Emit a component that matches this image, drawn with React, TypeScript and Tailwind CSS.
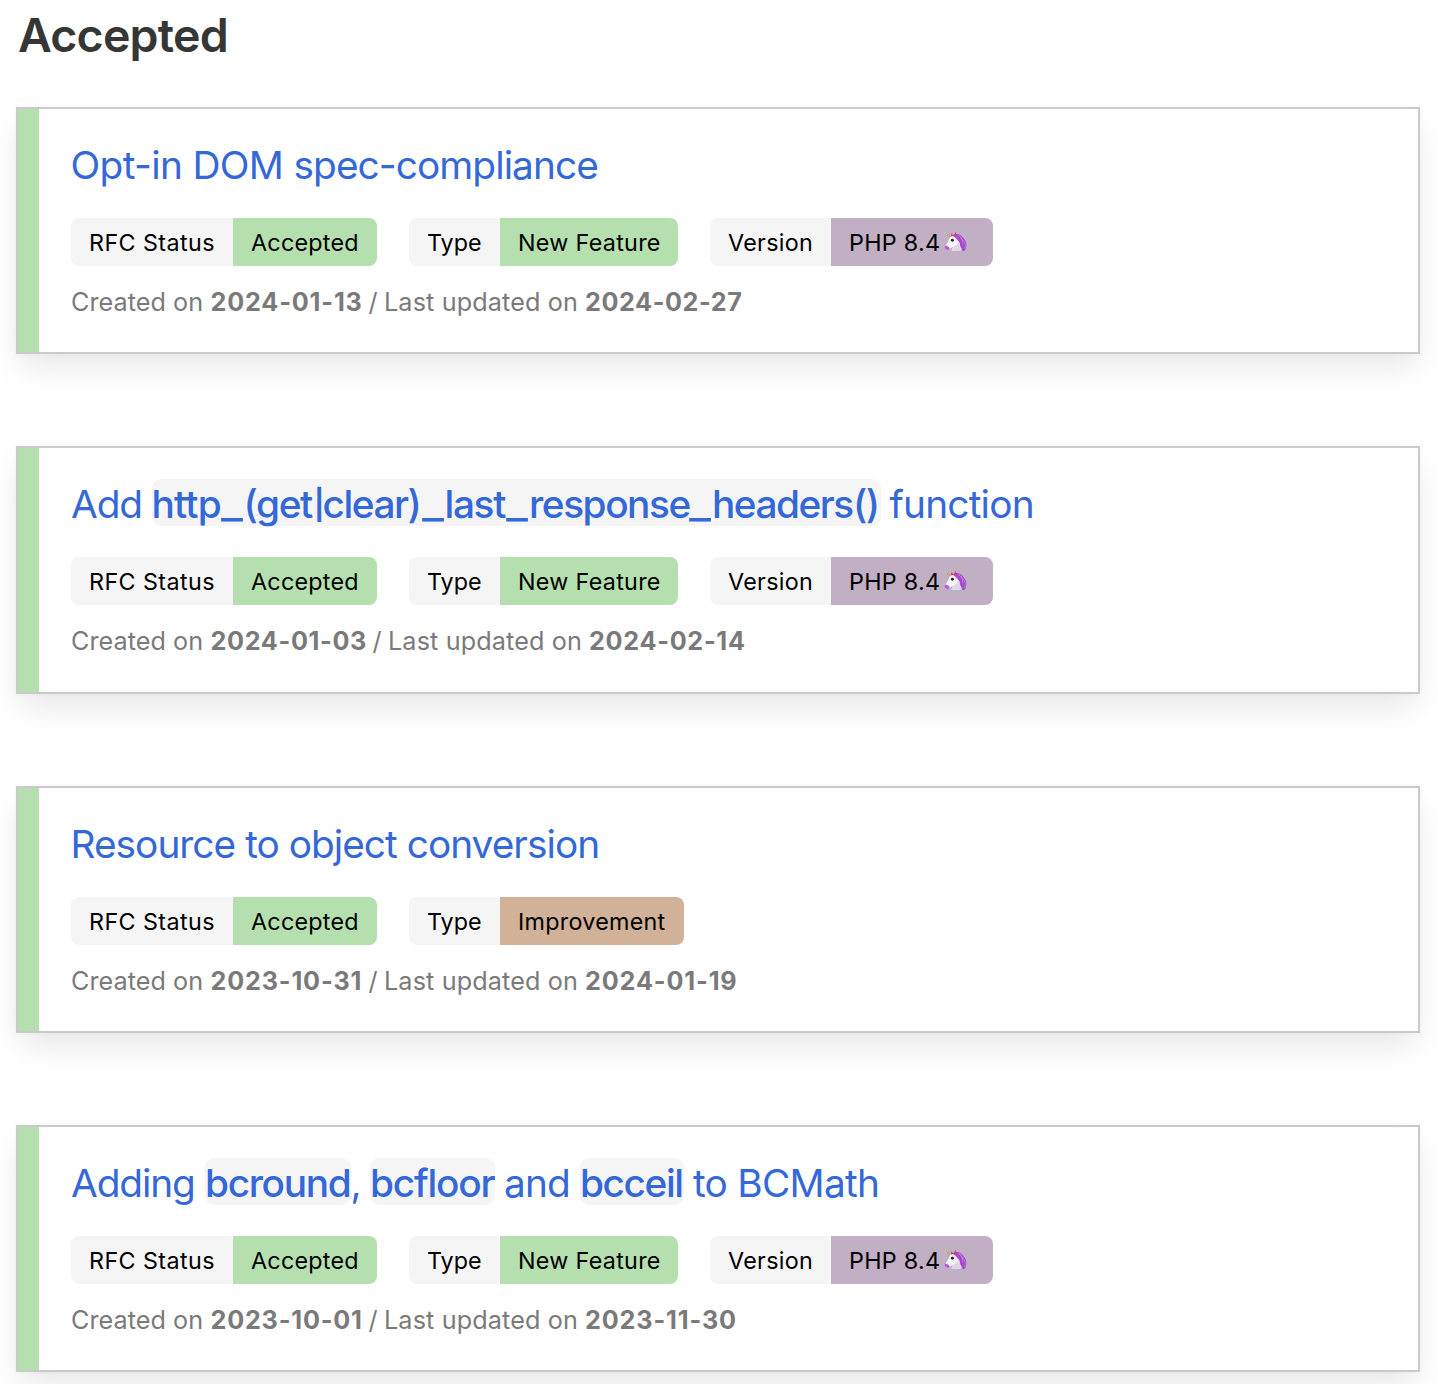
import type { ReactNode } from "react";

function Unicorn() {
  return (
    <svg viewBox="0 0 69 62" className="ml-[4px] h-[20.5px] w-[23px] shrink-0 -translate-y-[0.7px]">
      <path d="M26 12C34 5 51 7 57 19C66 27 70 42 66 48C66 56 61 61 55 60C57 51 52 48 45 47C36 41 29 28 26 12Z" fill="#a347cf" />
      <path d="M38 12C50 16 57 28 56 43C60 36 58 21 47 13Z" fill="#d07be8" />
      <path d="M57 25C64 33 66 43 62 53" fill="none" stroke="#c873e2" strokeWidth="3" />
      <path d="M18 18C26 11 37 13 42 24C48 33 48 44 51 57C42 61 29 60 22 57C25 51 28 49 28 46C23 49 19 52 14 55C8 59 2 53 3 46C8 38 12 30 18 18Z" fill="#f6f4fa" />
      <path d="M31 44C38 44 43 38 44 29C49 39 49 49 51 57C43 61 30 60 22 57C27 52 30 50 31 44Z" fill="#dcd4e8" />
      <path d="M3 44C10 43 16 48 17 53C12 59 4 57 2 50Z" fill="#bd5ad6" />
      <path d="M26 12C34 9 44 15 49 34C42 31 40 24 35 20C31 17 28 16 26 12Z" fill="#b44fd6" />
      <path d="M30 14L34 1L39 15ZM20 15L23 5L28 14Z" fill="#cf3f6c" />
      <path d="M0 1L20 11L15 19Z" fill="#f8d95f" />
      <path d="M5 4L9 6L7 10Z" fill="#4fc995" />
      <path d="M11 7L15 9L11 15L8 11Z" fill="#55b4ee" />
      <path d="M16 9L20 12L15 19L12 16Z" fill="#f08a63" />
      <circle cx="25" cy="27" r="4.500" fill="#2b2030" />
    </svg>
  );
}

function Tag({ label, children, color }: { label: ReactNode; children: ReactNode; color: string }) {
  return (
    <div className="flex h-12 overflow-hidden rounded-lg text-[23.3px] leading-[49px] whitespace-nowrap text-black">
      <div className="bg-[#f5f5f5] pl-[18px]">{label}</div>
      <div className={`flex items-center pl-[18px] ${color}`}>{children}</div>
    </div>
  );
}

function Code({ children, className }: { children: ReactNode; className: string }) {
  return <code className={`block h-[47px] rounded-[9px] bg-[#f5f5f5] font-['Inter',sans-serif] leading-[50px] font-medium ${className}`}>{children}</code>;
}

function Underscore() {
  return <span className="inline-block w-[23px] origin-left scale-x-[1.22] tracking-normal">_</span>;
}

type CardProps = {
  title: ReactNode;
  type: "feature" | "improvement";
  created: string;
  createdClass: string;
  updated: string;
  updatedClass: string;
  className?: string;
};

function Card({ title, type, created, createdClass, updated, updatedClass, className = "h-[247px]" }: CardProps) {
  return (
    <article className={`flex border-2 border-[#cacaca] bg-white shadow-[0_16px_32px_-4px_rgba(10,10,10,0.1),0_0_0_2px_rgba(10,10,10,0.01)] ${className}`}>
      <div className="w-[21px] shrink-0 bg-[#b5dfae]" />
      <div className="pt-[31px] pl-8">
        <h2 className="flex h-[47px] text-[38.8px] leading-[49px] whitespace-pre text-[#3468d8]">{title}</h2>
        <div className="mt-[31px] flex gap-8">
          <Tag
            label={<span className="block w-36 tracking-[0.42px]">RFC Status</span>}
            color="bg-[#b5dfae]"
          >
            <span className="block w-[126px] tracking-[0.25px]">Accepted</span>
          </Tag>
          <Tag
            label={<span className="block w-[73px]">Type</span>}
            color={type === "feature" ? "bg-[#b5dfae]" : "bg-[#d1b197]"}
          >
            {type === "feature" ? (
              <span className="block w-40 tracking-[0.3px]">New Feature</span>
            ) : (
              <span className="block w-[166px] tracking-[0.28px]">Improvement</span>
            )}
          </Tag>
          {type === "feature" && (
            <Tag label={<span className="block w-[103px] tracking-[0.3px]">Version</span>} color="bg-[#c1afc3]">
              <span className="flex w-36 items-center">
                <span className="w-[91px] shrink-0 tracking-[0.3px]">PHP 8.4</span>
                <Unicorn />
              </span>
            </Tag>
          )}
        </div>
        <p className="mt-4 flex h-10 text-[25.2px] leading-10 whitespace-pre text-[#7a7a7a]">
          <span className="w-[139.500px] tracking-[0.05px]">Created on</span>
          <strong className={`font-bold ${createdClass}`}>{created}</strong>
          <span className="w-[15.500px]">/</span>
          <span className="w-[201px] tracking-[0.13px]">Last updated on</span>
          <strong className={`font-bold ${updatedClass}`}>{updated}</strong>
        </p>
      </div>
    </article>
  );
}

export default function App() {
  return (
    <main className="h-[1384px] w-[1438px] overflow-hidden bg-white pl-4 font-['Inter',sans-serif]">
      <h1 className="h-[107px] pl-[2px] text-[46.5px] leading-[71px] font-semibold tracking-[-0.8px] text-[#363636]">Accepted</h1>
      <section className="flex w-[1404px] flex-col gap-[92px]">
        <Card
          title={
            <span className="-ml-[0.5px] tracking-[-0.93px]">
              <span className="tracking-[-0.64px]">Opt-in DOM </span>spec-compliance
            </span>
          }
          type="feature"
          created="2024-01-13"
          createdClass="w-[158px] tracking-[0.83px]"
          updated="2024-02-27"
          updatedClass="tracking-[0.58px]"
        />
        <Card
          className="h-[248px]"
          title={
            <>
              <span className="w-[80.5px] tracking-[-1.1px]">Add</span>
              <Code className="w-[729px] tracking-[-1.35px]">
                <span className="inline-block w-[69px] tracking-[-0.82px]">http</span>
                <Underscore />
                <span className="inline-block w-[69.5px] tracking-[-1.4px]">(get</span>
                <span className="inline-block w-[9.5px] origin-center -translate-x-[0.5px] scale-y-[0.76]">|</span>
                <span className="inline-block w-[99px] tracking-[-1.45px]">clear)</span>
                <Underscore />
                <span className="inline-block w-[61.5px]">last</span>
                <Underscore />
                <span className="inline-block w-[160px] tracking-[-1.45px]">response</span>
                <Underscore />
                <span className="inline-block w-[141px] tracking-[-1.5px]">headers</span>
                <span className="tracking-[-1.6px]">()</span>
              </Code>
              <span className="ml-[9px] tracking-[-0.8px]">function</span>
            </>
          }
          type="feature"
          created="2024-01-03"
          createdClass="w-[162px] tracking-[0.65px]"
          updated="2024-02-14"
          updatedClass="tracking-[0.7px]"
        />
        <Card
          title={<span className="-ml-[0.5px] tracking-[-0.97px]">Resource to object conversion</span>}
          type="improvement"
          created="2023-10-31"
          createdClass="w-[158px] tracking-[0.83px]"
          updated="2024-01-19"
          updatedClass="tracking-[0.86px]"
        />
        <Card
          title={
            <>
              <span className="w-[134px] tracking-[-1.1px]">Adding</span>
              <Code className="w-[146px] tracking-[-1.35px]">bcround</Code>
              <span className="-ml-[0.5px] w-[19.5px]">,</span>
              <Code className="w-[125px] tracking-[-1.2px]">bcfloor</Code>
              <span className="ml-[9px] w-[76px] tracking-[-0.8px]">and</span>
              <Code className="w-[104px] tracking-[-1.4px]">bcceil</Code>
              <span className="ml-[9px] tracking-[-0.72px]">to BCMath</span>
            </>
          }
          type="feature"
          created="2023-10-01"
          createdClass="w-[158px] tracking-[0.8px]"
          updated="2023-11-30"
          updatedClass="tracking-[0.86px]"
        />
      </section>
    </main>
  );
}
